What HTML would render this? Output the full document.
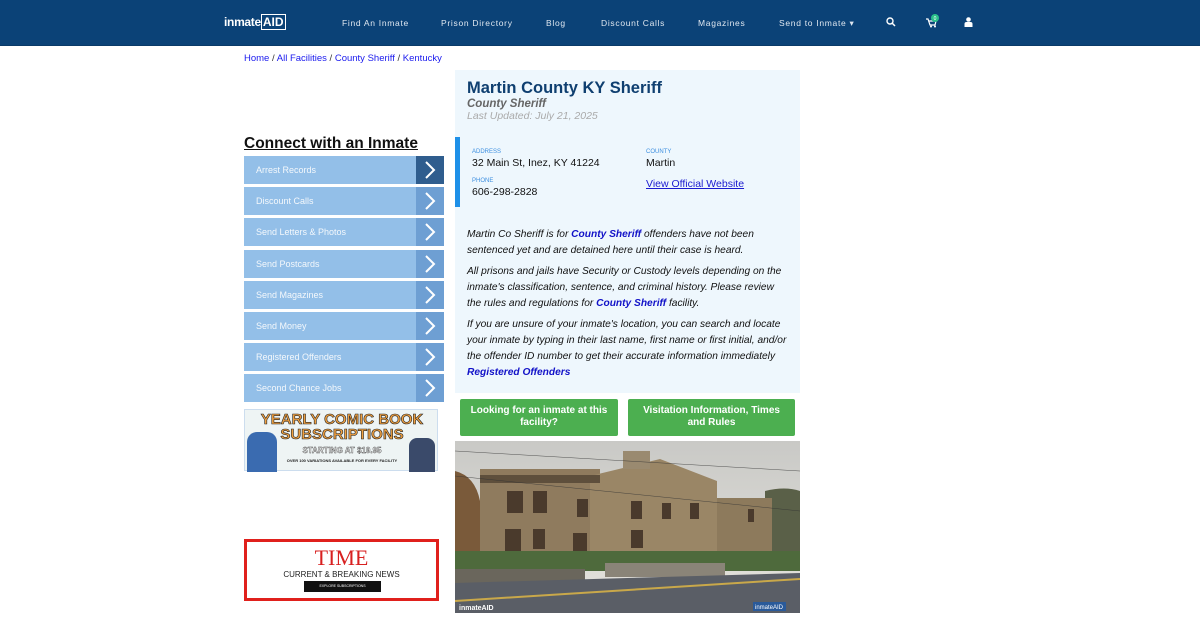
<!DOCTYPE html>
<html><head><meta charset="utf-8"><style>
*{margin:0;padding:0;box-sizing:border-box}
body{width:1200px;height:620px;overflow:hidden;background:#fff;font-family:"Liberation Sans",sans-serif;position:relative}
.hdr{position:absolute;left:0;top:0;width:1200px;height:46px;background:#0b4277;border-bottom:1px solid #0a3a68}
.hdr span{position:absolute;top:18px;color:#dfe7f0;font-size:8.5px;letter-spacing:.7px}
.logo{position:absolute;left:224px;top:15px;color:#fff;font-size:12px;font-weight:bold;letter-spacing:-.3px}
a{color:#0000ee}
.bc{position:absolute;left:244px;top:53px;font-size:9.5px;color:#333}
.bc a{color:#1a1aee;text-decoration:none}
h3{position:absolute;left:244px;top:135px;font-size:15.5px;font-weight:bold;text-decoration:underline;color:#111}
.item{position:absolute;left:244px;width:200px;height:28px;background:#93bfe8;color:#f4f8fc;font-size:9px;padding:9px 0 0 12px}
.item .ar{position:absolute;right:0;top:0;width:28px;height:28px;background:#6e9fd3}
.item .ar svg{position:absolute;left:7px;top:5px}
.box{position:absolute;left:455px;top:70px;width:345px;height:323px;background:#eef7fd}
.t1{position:absolute;left:467px;top:79px;font-size:16.5px;font-weight:bold;color:#0f3f70}
.t2{position:absolute;left:467px;top:98px;font-size:11.5px;font-weight:bold;font-style:italic;color:#666}
.t3{position:absolute;left:467px;top:110px;font-size:10.5px;font-style:italic;color:#aaa}
.bar{position:absolute;left:455px;top:137px;width:5px;height:70px;background:#1e90e8}
.lb{position:absolute;font-size:6px;color:#3d8fe0}
.vl{position:absolute;font-size:10.5px;color:#111}
.p{position:absolute;left:467px;width:325px;font-size:10.2px;font-style:italic;line-height:16px;color:#111}
.p b{color:#1212c8}
.btn{position:absolute;top:399px;height:37px;background:#4caf50;color:#fff;font-size:10px;font-weight:bold;text-align:center;line-height:11.5px;padding:6px 6px 0;border-radius:2px}
</style></head><body>
<div class="hdr">
<div class="logo">inmate<span style="position:static;color:#fff;font-size:12px;letter-spacing:0;border:1px solid #fff;padding:0 1px;font-weight:bold">AID</span></div>
<span style="left:342px">Find An Inmate</span>
<span style="left:441px">Prison Directory</span>
<span style="left:546px">Blog</span>
<span style="left:601px">Discount Calls</span>
<span style="left:698px">Magazines</span>
<span style="left:779px">Send to Inmate ▾</span>
<svg style="position:absolute;left:886px;top:17px" width="10" height="10"><circle cx="4" cy="4" r="3" stroke="#fff" stroke-width="1.4" fill="none"/><path d="M6 6l3 3" stroke="#fff" stroke-width="1.5"/></svg>
<svg style="position:absolute;left:925px;top:13px" width="16" height="16"><path d="M1 6h2l2 6h5l1-4H4" stroke="#fff" stroke-width="1.2" fill="none"/><circle cx="6" cy="13.5" r="1" fill="#fff"/><circle cx="10" cy="13.5" r="1" fill="#fff"/><circle cx="10" cy="5" r="4" fill="#29c08a"/><text x="8.6" y="7" font-size="5" fill="#fff">0</text></svg>
<svg style="position:absolute;left:964px;top:17px" width="9" height="10"><circle cx="4.5" cy="2.5" r="2.3" fill="#fff"/><path d="M0.5 10v-3q0-2 2-2h4q2 0 2 2v3z" fill="#fff"/></svg>
</div>
<div class="bc"><a>Home</a> / <a>All Facilities</a> / <a>County Sheriff</a> / <a>Kentucky</a></div>
<h3>Connect with an Inmate</h3>
<div class="item" style="top:156px">Arrest Records<div class="ar" style="background:#2f5d8e"><svg width="14" height="18"><path d="M3 1l8 8-8 8" stroke="#fff" stroke-width="2" fill="none"/></svg></div></div>
<div class="item" style="top:187px">Discount Calls<div class="ar"><svg width="14" height="18"><path d="M3 1l8 8-8 8" stroke="#fff" stroke-width="2" fill="none"/></svg></div></div>
<div class="item" style="top:218px">Send Letters &amp; Photos<div class="ar"><svg width="14" height="18"><path d="M3 1l8 8-8 8" stroke="#fff" stroke-width="2" fill="none"/></svg></div></div>
<div class="item" style="top:250px">Send Postcards<div class="ar"><svg width="14" height="18"><path d="M3 1l8 8-8 8" stroke="#fff" stroke-width="2" fill="none"/></svg></div></div>
<div class="item" style="top:281px">Send Magazines<div class="ar"><svg width="14" height="18"><path d="M3 1l8 8-8 8" stroke="#fff" stroke-width="2" fill="none"/></svg></div></div>
<div class="item" style="top:312px">Send Money<div class="ar"><svg width="14" height="18"><path d="M3 1l8 8-8 8" stroke="#fff" stroke-width="2" fill="none"/></svg></div></div>
<div class="item" style="top:343px">Registered Offenders<div class="ar"><svg width="14" height="18"><path d="M3 1l8 8-8 8" stroke="#fff" stroke-width="2" fill="none"/></svg></div></div>
<div class="item" style="top:374px">Second Chance Jobs<div class="ar"><svg width="14" height="18"><path d="M3 1l8 8-8 8" stroke="#fff" stroke-width="2" fill="none"/></svg></div></div>
<div style="position:absolute;left:244px;top:409px;width:194px;height:62px;background:#eef4f4;border:1px solid #cde">
<div style="position:absolute;left:0;width:194px;top:2px;text-align:center;font-size:15px;font-weight:bold;color:#f0a040;-webkit-text-stroke:.6px #222;line-height:15px">YEARLY COMIC BOOK<br>SUBSCRIPTIONS</div>
<div style="position:absolute;left:0;width:194px;top:36px;text-align:center;font-size:8px;font-weight:bold;color:#fff;-webkit-text-stroke:.4px #444">STARTING AT $19.95</div>
<div style="position:absolute;left:0;width:194px;top:48px;text-align:center;font-size:4px;font-weight:bold;color:#222">OVER 100 VARIATIONS AVAILABLE FOR EVERY FACILITY</div>
<div style="position:absolute;left:2px;top:22px;width:30px;height:40px;background:#3a6bb0;border-radius:10px 10px 0 0"></div>
<div style="position:absolute;right:2px;top:28px;width:26px;height:34px;background:#3a4a6a;border-radius:8px 8px 0 0"></div>
</div>
<div style="position:absolute;left:244px;top:539px;width:195px;height:62px;border:3px solid #e0201c;background:#fff">
<div style="position:absolute;left:0;width:189px;top:3px;text-align:center;font-family:'Liberation Serif',serif;font-size:22px;color:#d82020">TIME</div>
<div style="position:absolute;left:0;width:189px;top:28px;text-align:center;font-size:8px;color:#222">CURRENT &amp; BREAKING NEWS</div>
<div style="position:absolute;left:57px;top:39px;width:77px;height:11px;background:#111;color:#fff;font-size:3.5px;text-align:center;line-height:11px">EXPLORE SUBSCRIPTIONS</div>
</div>
<div class="box"></div>
<div class="t1">Martin County KY Sheriff</div>
<div class="t2">County Sheriff</div>
<div class="t3">Last Updated: July 21, 2025</div>
<div class="bar"></div>
<div class="lb" style="left:472px;top:149px">ADDRESS</div>
<div class="vl" style="left:472px;top:157px">32 Main St, Inez, KY 41224</div>
<div class="lb" style="left:472px;top:178px">PHONE</div>
<div class="vl" style="left:472px;top:186px">606-298-2828</div>
<div class="lb" style="left:646px;top:149px">COUNTY</div>
<div class="vl" style="left:646px;top:157px">Martin</div>
<div class="vl" style="left:646px;top:178px"><a style="color:#1a1ad0;text-decoration:underline">View Official Website</a></div>
<div class="p" style="top:227px;width:320px">Martin Co Sheriff is for <b>County Sheriff</b> offenders have not been sentenced yet and are detained here until their case is heard.</div>
<div class="p" style="top:264px;width:322px">All prisons and jails have Security or Custody levels depending on the inmate's classification, sentence, and criminal history. Please review the rules and regulations for <b>County Sheriff</b> facility.</div>
<div class="p" style="top:317px;width:322px">If you are unsure of your inmate's location, you can search and locate your inmate by typing in their last name, first name or first initial, and/or the offender ID number to get their accurate information immediately <b>Registered Offenders</b></div>
<div class="btn" style="left:460px;width:158px">Looking for an inmate at this facility?</div>
<div class="btn" style="left:628px;width:167px">Visitation Information, Times and Rules</div>
<svg style="position:absolute;left:455px;top:441px" width="345" height="172" viewBox="0 0 345 172">
<defs><linearGradient id="s" x1="0" y1="0" x2="0" y2="1"><stop offset="0" stop-color="#c9c9c6"/><stop offset="1" stop-color="#e6e4de"/></linearGradient></defs>
<rect width="345" height="172" fill="url(#s)"/>
<path d="M0 30Q20 35 25 60V120H0z" fill="#7a5a3a"/>
<path d="M310 50Q330 45 345 50V110H310z" fill="#5a6048"/>
<rect x="25" y="28" width="120" height="100" fill="#8f7b5e"/>
<path d="M135 35L205 18L262 40V118H135z" fill="#9a8666"/>
<rect x="168" y="10" width="27" height="18" fill="#9a8a70"/>
<rect x="262" y="57" width="55" height="60" fill="#8d7a5c"/>
<rect x="25" y="34" width="120" height="8" fill="#5e4f3c"/>
<g fill="#4a3a2c"><rect x="52" y="50" width="16" height="22"/><rect x="78" y="50" width="14" height="22"/><rect x="122" y="58" width="11" height="18"/><rect x="176" y="60" width="11" height="18"/><rect x="207" y="62" width="9" height="16"/><rect x="235" y="62" width="9" height="16"/><rect x="50" y="88" width="16" height="22"/><rect x="78" y="88" width="12" height="20"/><rect x="118" y="92" width="14" height="22"/><rect x="176" y="89" width="12" height="18"/><rect x="293" y="68" width="6" height="13"/></g>
<rect x="0" y="110" width="345" height="20" fill="#4e6a3c"/>
<rect x="0" y="128" width="130" height="14" fill="#6a665c"/>
<rect x="150" y="122" width="120" height="14" fill="#8a8478"/>
<path d="M0 142L345 132V172H0z" fill="#5a5e66"/>
<path d="M0 160L345 138" stroke="#c9a84a" stroke-width="2"/>
<path d="M0 35L345 70M0 10L345 30" stroke="#333" stroke-width=".4"/>
<text x="4" y="169" font-size="7" font-weight="bold" fill="#fff" font-family="Liberation Sans">inmateAID</text>
<rect x="298" y="161" width="33" height="9" fill="#2a5a9a"/><text x="300" y="168" font-size="6" fill="#fff" font-family="Liberation Sans">inmateAID</text>
</svg>
</body></html>
